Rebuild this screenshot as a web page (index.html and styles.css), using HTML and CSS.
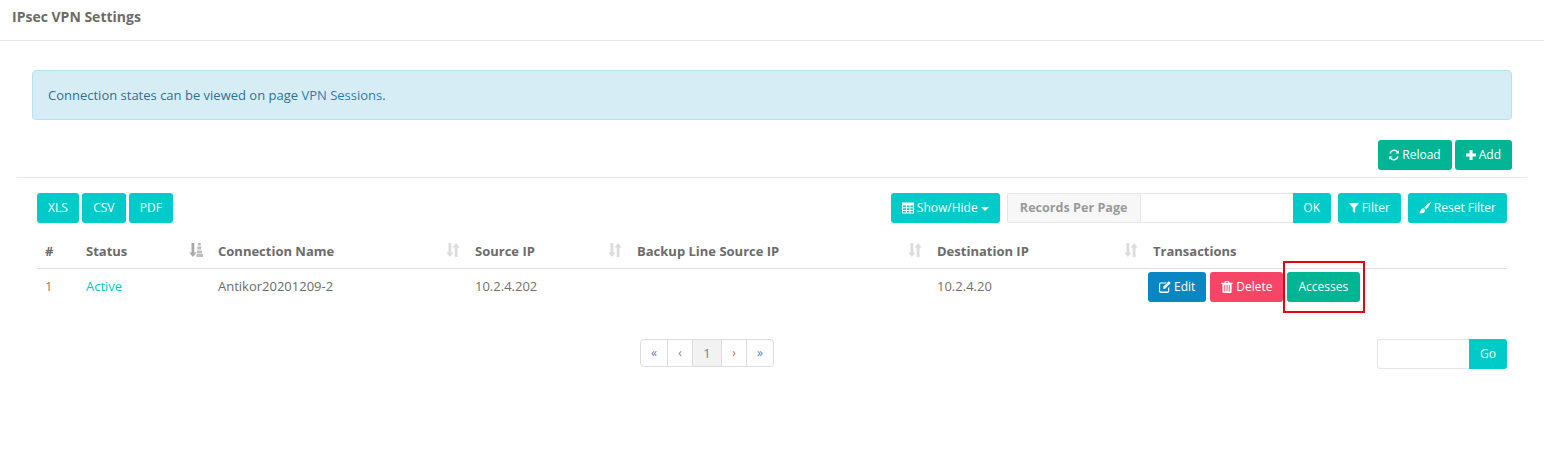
FILE: index.html
```html
<!DOCTYPE html>
<html lang="en">
<head>
<meta charset="utf-8">
<title>IPsec VPN Settings</title>
<link rel="stylesheet" href="styles.css">
</head>
<body>
<header class="page-head"><h1 class="page-title">IPsec VPN Settings</h1></header>
<main class="content">
  <div class="alert">Connection states can be viewed on page <a class="alert-link" href="#">VPN Sessions</a>.</div>
  <div class="top-actions">
    <button class="btn green"><svg class="ico ico-sm" viewBox="1 1 12 12"><path d="M12.900 1.200v4.100H8.800l1.600-1.600A4.100 4.100 0 0 0 3.300 5.200H1.300A6 6 0 0 1 11.700 2.400zM1.100 12.800V8.700h4.100l-1.600 1.600a4.100 4.100 0 0 0 7.100-1.500h2A6 6 0 0 1 2.300 11.600z"/></svg>Reload</button>
    <button class="btn green"><svg class="ico ico-sm" viewBox="1.500 1.500 11 11"><path d="M5.300 1.500h3.400v3.800h3.800v3.400H8.700v3.800H5.300V8.700H1.500V5.300h3.800z"/></svg>Add</button>
  </div>
  <div class="panel">
    <div class="tools">
      <div class="tools-left">
        <button class="btn teal">XLS</button>
        <button class="btn teal w-csv">CSV</button>
        <button class="btn teal w-pdf">PDF</button>
      </div>
      <div class="tools-right">
        <button class="btn teal"><svg class="ico" viewBox="1 1.500 12 11"><path fill-rule="evenodd" d="M1 1.500h12v11H1zM2 4.500v1.800h3V4.500zM6 4.500v1.800h2.500V4.500zM9.500 4.500v1.800H12V4.500zM2 7.200V9h3V7.200zM6 7.200V9h2.500V7.200zM9.500 7.200V9H12V7.200zM2 9.900v1.700h3V9.900zM6 9.900v1.700h2.500V9.900zM9.500 9.900v1.700H12V9.900z"/></svg>Show/Hide <span class="caret"></span></button>
        <div class="input-group">
          <span class="addon">Records Per Page</span>
          <input class="records-input" type="text" aria-label="Records Per Page">
          <button class="btn teal join w-ok">OK</button>
        </div>
        <button class="btn teal"><svg class="ico ico-sm" viewBox="1.500 2 11 11"><path d="M1.500 2h11L8.300 7.200V13L5.700 11V7.200z"/></svg>Filter</button>
        <button class="btn teal"><svg class="ico" viewBox="1 1 12 12"><path d="M13 1c.6.500-2.500 5-4.800 7.200L6.300 6.500C8.500 3.800 12.300.500 13 1zM5.700 7.200l1.800 1.700c-.2 2.500-3 3.700-6.500 3.300 1.300-.8 1.200-1.500 1.500-2.600.3-1.300 1.700-2.300 3.200-2.400z"/></svg>Reset Filter</button>
      </div>
    </div>
    <table class="grid">
      <colgroup>
        <col class="c-num"><col class="c-status"><col class="c-name"><col class="c-src"><col class="c-backup"><col class="c-dst"><col class="c-act">
      </colgroup>
      <thead>
        <tr>
          <th>#</th>
          <th class="sortable">Status<svg class="sort sort-on" viewBox="0 0 14 14"><path class="dark" d="M2.500 0h2.800v9.500h2.200L3.900 14 .3 9.500h2.200z"/><path d="M8.800 0h3v2.500h-3zM8.300 3.500h4V6.500h-4zM7.800 7.500h5.200v3H7.800zM7.500 11h6.500v3H7.500z"/></svg></th>
          <th class="sortable">Connection Name<svg class="sort" viewBox="0 0 14 14"><path d="M2.500 0h2.800v9.500h2.200L3.900 14 .3 9.500h2.200zM11.500 14H8.700V4.500H6.500L10.100 0l3.600 4.500h-2.200z"/></svg></th>
          <th class="sortable">Source IP<svg class="sort" viewBox="0 0 14 14"><path d="M2.500 0h2.800v9.500h2.200L3.900 14 .3 9.500h2.200zM11.500 14H8.700V4.500H6.500L10.100 0l3.600 4.500h-2.200z"/></svg></th>
          <th class="sortable">Backup Line Source IP<svg class="sort" viewBox="0 0 14 14"><path d="M2.500 0h2.800v9.500h2.200L3.900 14 .3 9.500h2.200zM11.500 14H8.700V4.500H6.500L10.100 0l3.600 4.500h-2.200z"/></svg></th>
          <th class="sortable">Destination IP<svg class="sort" viewBox="0 0 14 14"><path d="M2.500 0h2.800v9.500h2.200L3.900 14 .3 9.500h2.200zM11.500 14H8.700V4.500H6.500L10.100 0l3.600 4.500h-2.200z"/></svg></th>
          <th>Transactions</th>
        </tr>
      </thead>
      <tbody>
        <tr>
          <td class="num">1</td>
          <td class="active">Active</td>
          <td>Antikor20201209-2</td>
          <td class="ip">10.2.4.202</td>
          <td></td>
          <td class="ip">10.2.4.20</td>
          <td class="actions">
            <div class="action-row">
              <button class="btn blue"><svg class="ico" viewBox="0.800 1 12.500 12.500"><path d="M2.500 2.500h6.500l-1.200 1.200H2.800a.8.8 0 0 0-.8.800v6.700c0 .4.400.8.800.8h6.700c.4 0 .8-.4.800-.8V8.300l1.200-1.200v4.200c0 1.200-.9 2.100-2 2.100H2.800c-1.200 0-2-.9-2-2.100V4.500c0-1.100.8-2 1.700-2z"/><path d="M11 1.200l2 2L7.200 9H5.200V7z"/></svg>Edit</button>
              <button class="btn red w-del"><svg class="ico" viewBox="1 0.800 12 12.500"><path fill-rule="evenodd" d="M5 .8h4l.8 1.700H13v1.300h-1.200V12c0 .8-.5 1.300-1.100 1.300H3.300c-.6 0-1.100-.5-1.100-1.300V3.800H1V2.500h3.200zM5.700 2.500h2.600l-.3-.6H6zM4.200 5v6.700h1V5zM6.500 5v6.700h1V5zM8.800 5v6.700h1V5z"/></svg>Delete</button>
              <button class="btn green marked">Accesses</button>
            </div>
          </td>
        </tr>
      </tbody>
    </table>
    <div class="foot">
      <nav class="pager">
        <a class="pg edge link" href="#">«</a><a class="pg orange" href="#">‹</a><a class="pg current" href="#">1</a><a class="pg orange" href="#">›</a><a class="pg edge-end link" href="#">»</a>
      </nav>
      <div class="goto">
        <input class="goto-input" type="text" aria-label="Page">
        <button class="btn teal join">Go</button>
      </div>
    </div>
  </div>
</main>
</body>
</html>
```

FILE: styles.css
```css
* { box-sizing: border-box; }
html, body { margin: 0; padding: 0; }
body {
  background: #fff;
  color: #6b6b6b;
  font-family: "Open Sans", sans-serif;
  font-size: 13px;
  line-height: 18px;
  height: 451px;
  overflow: hidden;
}
.page-head {
  height: 41px;
  padding: 8px 12px 0;
  border-bottom: 1px solid #e7e7e7;
}
.page-title {
  margin: 0;
  font-size: 14px;
  font-weight: 700;
  line-height: 18px;
  color: #6e6a68;
}
.content { padding: 29px 17px 0; }
.alert {
  height: 50px;
  margin: 0 15px;
  padding: 15px;
  background: #d7edf6;
  border: 1px solid #b4e4ef;
  border-radius: 4px;
  color: #31708f;
  font-size: 13px;
}
.alert-link { color: #2f7cb0; text-decoration: none; }
.top-actions {
  display: flex;
  justify-content: flex-end;
  gap: 3px;
  margin: 20px 15px 7px 0;
}
.btn {
  display: inline-flex;
  align-items: center;
  justify-content: center;
  height: 30px;
  padding: 0 11px;
  border: 0;
  border-radius: 3px;
  color: #fff;
  font-family: inherit;
  font-size: 12px;
  line-height: 18px;
  white-space: nowrap;
}
.teal { background: #00cbc8; }
.green { background: #00b593; }
.blue { background: #0987c5; }
.red { background: #f64566; }
.w-csv { width: 44px; padding: 0; }
.w-pdf { width: 44px; padding: 0; }
.w-ok { width: 38px; padding: 0; }
.w-del { width: 73px; padding: 0; }
.ico { width: 12px; height: 12px; margin-right: 3px; fill: currentColor; flex: none; }
.ico-sm { width: 10px; }
.caret {
  width: 0; height: 0;
  margin-left: 3px;
  margin-top: 2px;
  border-top: 4px solid #fff;
  border-left: 4px solid transparent;
  border-right: 4px solid transparent;
}
.panel { border-top: 1px solid #e7e7e7; padding: 15px 20px 0; }
.tools { display: flex; justify-content: space-between; }
.tools-left { display: flex; gap: 3px; }
.tools-right { display: flex; gap: 7px; }
.input-group { display: flex; height: 30px; }
.addon {
  width: 134px;
  border: 1px solid #e5e5e5;
  background: #f7f7f7;
  color: #9a9a9a;
  font-weight: 700;
  font-size: 12.6px;
  line-height: 28px;
  text-align: center;
  border-radius: 2px 0 0 2px;
}
.records-input {
  width: 152px;
  height: 30px;
  border: 1px solid #e5e5e5;
  border-left: 0;
  border-right: 0;
  background: #fff;
  outline: 0;
}
.join { border-radius: 0 3px 3px 0; }
.grid {
  width: 1470px;
  margin-top: 10px;
  border-collapse: separate;
  border-spacing: 0;
  table-layout: fixed;
}
.c-num { width: 41px; }
.c-status { width: 132px; }
.c-name { width: 257px; }
.c-src { width: 162px; }
.c-backup { width: 300px; }
.c-dst { width: 216px; }
.c-act { width: 362px; }
th {
  position: relative;
  height: 36px;
  padding: 1px 8px 0;
  border-bottom: 1px solid #e0e0e0;
  text-align: left;
  font-size: 13px;
  font-weight: 700;
  color: #6b6b6b;
}
.sort {
  position: absolute;
  right: 7px;
  top: 10px;
  width: 14px;
  height: 14px;
  fill: #dcdcdc;
}
.sort-on { fill: #bdbdbd; }
.sort-on .dark { fill: #a8a8a8; }
td {
  height: 36px;
  padding: 0 8px 2px;
  font-size: 13px;
  color: #6b6b6b;
}
.num { color: #b0714d; }
.active { color: #00cbc8; }
.ip { color: #7a6e68; }
td.actions { padding: 3px 0 3px 3px; }
.action-row { display: flex; gap: 4px; align-items: center; }
.marked { position: relative; width: 73px; padding: 0 1px 0 0; }
.marked::after {
  content: "";
  position: absolute;
  inset: -11px -5px -11px -4px;
  border: 2px solid #e8000f;
}
.foot {
  position: relative;
  display: flex;
  justify-content: flex-end;
  margin-top: 34px;
}
.pager {
  position: absolute;
  left: 603px;
  top: 0;
  display: flex;
  height: 28px;
  border: 1px solid #ddd;
  border-radius: 4px;
  overflow: hidden;
}
.pg, .edge-end {
  display: flex;
  align-items: center;
  justify-content: center;
  width: 25px;
  font-size: 12px;
  text-decoration: none;
  border-left: 1px solid #ddd;
}
.pg:first-child { border-left: 0; }
.edge { width: 26px; }
.edge-end { width: 27px; }
.link { color: #4a83b8; }
.orange { color: #b0714d; }
.current { width: 29px; background: #f2f2f2; color: #8a7a70; font-size: 13px; }
.goto { display: flex; height: 30px; }
.goto-input {
  width: 92px;
  height: 30px;
  border: 1px solid #e5e5e5;
  border-right: 0;
  border-radius: 3px 0 0 3px;
  outline: 0;
}
.goto .btn { width: 38px; padding: 0; }
```
